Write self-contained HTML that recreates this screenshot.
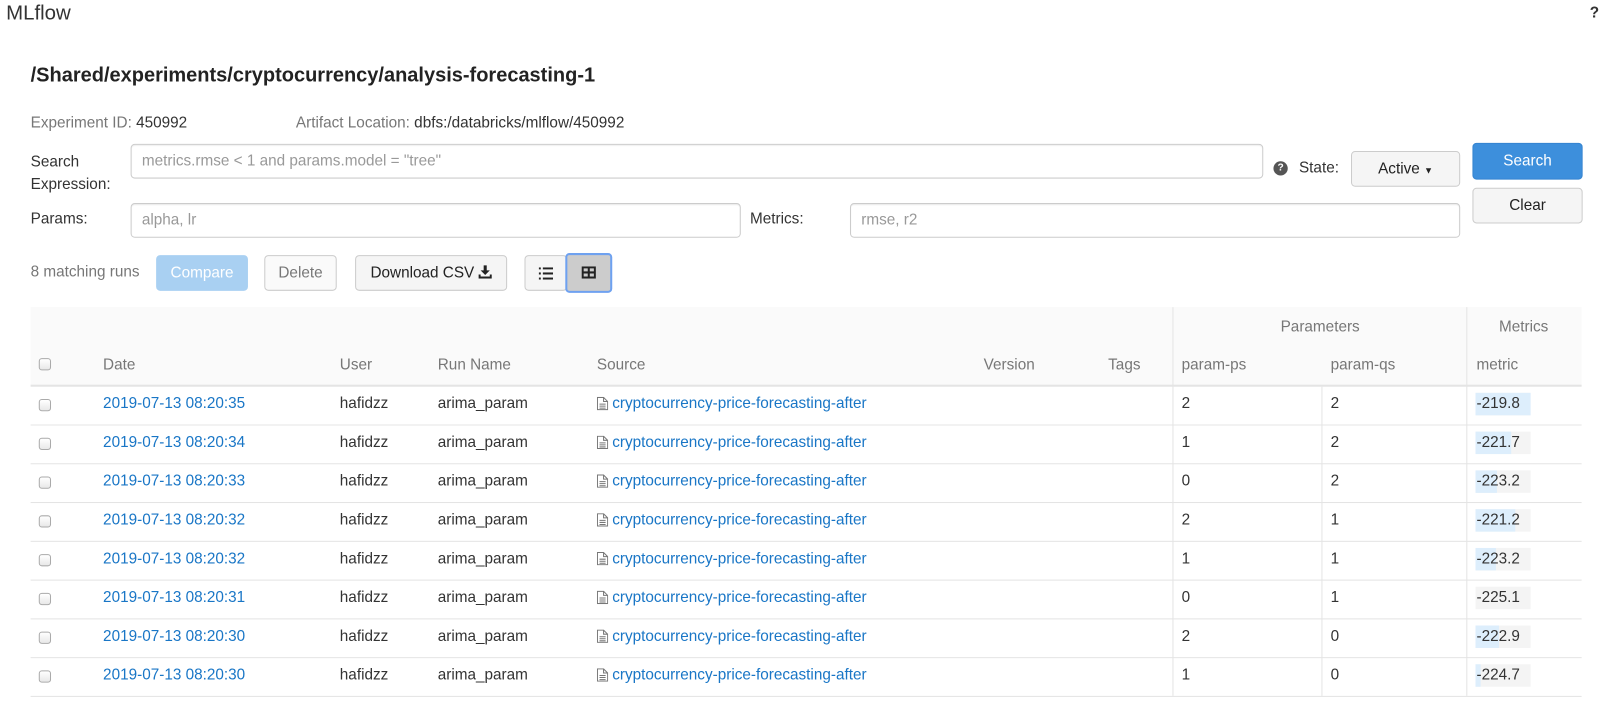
<!DOCTYPE html>
<html><head><meta charset="utf-8"><style>
*{box-sizing:border-box}
body{margin:0;width:1600px;height:717px;background:#fff;font-family:"Liberation Sans",Arial,sans-serif;color:#333;font-size:15px;position:relative;overflow:hidden}
#w{position:absolute;left:0;top:0;width:1568px;height:703px;transform:scale(1.0204);transform-origin:0 0}
.a{position:absolute;white-space:nowrap}
.inp{position:absolute;border:1px solid #ccc;border-radius:4px;height:34px;color:#999;padding:7px 10px;font-size:15px;box-shadow:inset 0 1px 1px rgba(0,0,0,.075)}
.btn{position:absolute;border:1px solid #ccc;border-radius:4px;background:#f5f5f5;text-align:center;font-size:15px;color:#222}
.lnk{color:#1976c6}
.cb{position:absolute;left:38px;width:12px;height:12px;border:1px solid #aaa;border-radius:3px;background:linear-gradient(#fff,#e8e8e8)}
.hl{position:absolute;left:30px;width:1520px;height:1px;background:#e4e4e4}
.bar{position:absolute;left:1446px;width:54px;height:22px;background:#f4f4f4}
.bar i{position:absolute;left:0;top:0;height:22px;background:#ddeefc}
.bar span{position:absolute;left:1px;top:2px;color:#333}
</style></head><body><div id="w">
<div class="a" style="left:6px;top:2px;font-size:20px;color:#333;font-weight:300">MLflow</div>
<div class="a" style="left:1558px;top:4px;font-size:15px;font-weight:bold">?</div>
<div class="a" style="left:30px;top:63px;font-size:19.6px;font-weight:bold;color:#222">/Shared/experiments/cryptocurrency/analysis-forecasting-1</div>
<div class="a" style="left:30px;top:112px;color:#777">Experiment ID: <span style="color:#333">450992</span></div>
<div class="a" style="left:290px;top:112px;color:#777">Artifact Location: <span style="color:#333">dbfs:/databricks/mlflow/450992</span></div>
<div class="a" style="left:30px;top:148px;line-height:22px">Search<br>Expression:</div>
<div class="inp" style="left:128px;top:141px;width:1110px">metrics.rmse &lt; 1 and params.model = "tree"</div>
<div class="a" style="left:1248px;top:158px;width:14px;height:14px;border-radius:50%;background:#555;color:#fff;font-size:10px;font-weight:bold;text-align:center;line-height:14px">?</div>
<div class="a" style="left:1273px;top:156px">State:</div>
<div class="btn" style="left:1324px;top:148px;width:107px;height:35px;line-height:33px">Active <span style="font-size:9px">▼</span></div>
<div class="btn" style="left:1443px;top:140px;width:108px;height:36px;line-height:34px;background:#3d8fdc;border-color:#3584d0;color:#fff">Search</div>
<div class="btn" style="left:1443px;top:184px;width:108px;height:35px;line-height:33px">Clear</div>
<div class="a" style="left:30px;top:206px">Params:</div>
<div class="inp" style="left:128px;top:199px;width:598px">alpha, lr</div>
<div class="a" style="left:735px;top:206px">Metrics:</div>
<div class="inp" style="left:833px;top:199px;width:598px">rmse, r2</div>
<div class="a" style="left:30px;top:258px;color:#777">8 matching runs</div>
<div class="btn" style="left:153px;top:250px;width:90px;height:35px;line-height:33px;background:#a9d0f2;border-color:#a9d0f2;color:#fff">Compare</div>
<div class="btn" style="left:259px;top:250px;width:71px;height:35px;line-height:33px;color:#777;background:#fafafa">Delete</div>
<div class="btn" style="left:348px;top:250px;width:149px;height:35px;line-height:33px">Download CSV <svg width="13" height="13" viewBox="0 0 13 13" style="vertical-align:-1px"><path d="M5 0h3v5h3l-4.5 4.5L2 5h3z M0 9h2v2h9V9h2v4H0z" fill="#222"/></svg></div>
<div class="btn" style="left:514px;top:250px;width:42px;height:35px"><svg width="14" height="12" viewBox="0 0 14 12" style="margin-top:11px"><g fill="#222"><rect x="0" y="0" width="2" height="2"/><rect x="4" y="0" width="10" height="2"/><rect x="0" y="5" width="2" height="2"/><rect x="4" y="5" width="10" height="2"/><rect x="0" y="10" width="2" height="2"/><rect x="4" y="10" width="10" height="2"/></g></svg></div>
<div class="btn" style="left:554px;top:248px;width:46px;height:39px;background:#ccc;border:2px solid #6ea1f0"><svg width="14" height="12" viewBox="0 0 14 12" style="margin-top:11px"><path d="M0 0h14v12H0z M2 2v3h4V2z M8 2v3h4V2z M2 7v3h4V7z M8 7v3h4V7z" fill="#222" fill-rule="evenodd"/></svg></div>

<div class="a" style="left:30px;top:301px;width:1520px;height:77px;background:#fafafa"></div>
<div class="a" style="left:30px;top:377px;width:1520px;height:2px;background:#e4e4e4"></div>
<div class="a" style="left:1149px;top:301px;width:1px;height:381px;background:#e4e4e4"></div>
<div class="a" style="left:1437px;top:301px;width:1px;height:381px;background:#e4e4e4"></div>
<div class="a" style="left:1295px;top:379px;width:1px;height:303px;background:#e4e4e4"></div>
<div class="a" style="left:1255px;top:312px;color:#777">Parameters</div>
<div class="a" style="left:1469px;top:312px;color:#777">Metrics</div>
<div class="cb" style="top:351px"></div>
<div class="a" style="left:101px;top:349px;color:#777">Date</div>
<div class="a" style="left:333px;top:349px;color:#777">User</div>
<div class="a" style="left:429px;top:349px;color:#777">Run Name</div>
<div class="a" style="left:585px;top:349px;color:#777">Source</div>
<div class="a" style="left:964px;top:349px;color:#777">Version</div>
<div class="a" style="left:1086px;top:349px;color:#777">Tags</div>
<div class="a" style="left:1158px;top:349px;color:#777">param-ps</div>
<div class="a" style="left:1304px;top:349px;color:#777">param-qs</div>
<div class="a" style="left:1447px;top:349px;color:#777">metric</div>
<div id="rows"></div>
</div>
<script>
var d=[["35",2,2,"-219.8",1],["34",1,2,"-221.7",.65],["33",0,2,"-223.2",.38],["32",2,1,"-221.2",.73],["32",1,1,"-223.2",.37],["31",0,1,"-225.1",0],["30",2,0,"-222.9",.42],["30",1,0,"-224.7",.09]];
var h="";
d.forEach(function(r,i){var y=379+i*38;var t=y+8;
h+='<div class="cb" style="top:'+(y+12)+'px"></div>'+
'<div class="a lnk" style="left:101px;top:'+t+'px">2019-07-13 08:20:'+r[0]+'</div>'+
'<div class="a" style="left:333px;top:'+t+'px">hafidzz</div>'+
'<div class="a" style="left:429px;top:'+t+'px">arima_param</div>'+
'<div class="a lnk" style="left:585px;top:'+t+'px"><svg width="11" height="13" viewBox="0 0 11 13" style="vertical-align:-2px;margin-right:4px"><path d="M.5.5h6l4 4v8h-10z M6.5.5v4h4 M2.5 7h6 M2.5 9h6 M2.5 11h6" fill="none" stroke="#777" stroke-width="1"/></svg>cryptocurrency-price-forecasting-after</div>'+
'<div class="a" style="left:1158px;top:'+t+'px">'+r[1]+'</div>'+
'<div class="a" style="left:1304px;top:'+t+'px">'+r[2]+'</div>'+
'<div class="bar" style="top:'+(y+6)+'px"><i style="width:'+(54*r[4])+'px"></i><span>'+r[3]+'</span></div>'+
'<div class="hl" style="top:'+(y+37)+'px"></div>';});
document.getElementById("rows").innerHTML=h;
</script>
</body></html>
